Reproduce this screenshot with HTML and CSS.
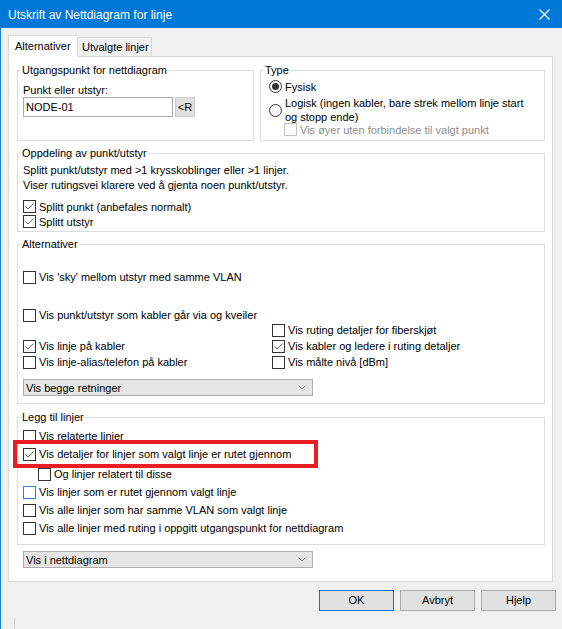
FILE: index.html
```html
<!DOCTYPE html>
<html lang="no">
<head>
<meta charset="utf-8">
<title>Utskrift av Nettdiagram for linje</title>
<link rel="stylesheet" href="styles.css">
</head>
<body>
<div class="dialog">
  <div class="titlebar">
    <span class="title">Utskrift av Nettdiagram for linje</span>
    <svg class="close" width="11" height="11" viewBox="0 0 11 11"><path d="M0.5 0.5 L10.5 10.5 M10.5 0.5 L0.5 10.5" stroke="#fff" stroke-width="1.1" fill="none"/></svg>
  </div>
  <div class="tabs">
    <div class="tab active">Alternativer</div>
    <div class="tab">Utvalgte linjer</div>
  </div>
  <div class="panel">
    <div class="toprow">
      <fieldset class="grp g-start">
        <legend>Utgangspunkt for nettdiagram</legend>
        <div class="lbl">Punkt eller utstyr:</div>
        <div class="inputrow">
          <div class="textbox">NODE-01</div>
          <div class="smallbtn">&lt;R</div>
        </div>
      </fieldset>
      <fieldset class="grp g-type">
        <legend>Type</legend>
        <div class="radio"><span class="rb on"><span class="dot"></span></span><span>Fysisk</span></div>
        <div class="radio multi"><span class="rb"></span><span>Logisk (ingen kabler, bare strek mellom linje start<br>og stopp ende)</span></div>
        <div class="cb disabled sub"><span class="box"></span><span>Vis øyer uten forbindelse til valgt punkt</span></div>
      </fieldset>
    </div>

    <fieldset class="grp g-split">
      <legend>Oppdeling av punkt/utstyr</legend>
      <div class="txt">Splitt punkt/utstyr med &gt;1 krysskoblinger eller &gt;1 linjer.</div>
      <div class="txt">Viser rutingsvei klarere ved å gjenta noen punkt/utstyr.</div>
      <div class="cb r15 first"><span class="box"><svg width="11" height="11" viewBox="0 0 11 11"><polyline points="1.5,5.5 4,8 9.5,2.5" fill="none" stroke="#5f5f5f" stroke-width="1"/></svg></span><span>Splitt punkt (anbefales normalt)</span></div>
      <div class="cb r15"><span class="box"><svg width="11" height="11" viewBox="0 0 11 11"><polyline points="1.5,5.5 4,8 9.5,2.5" fill="none" stroke="#5f5f5f" stroke-width="1"/></svg></span><span>Splitt utstyr</span></div>
    </fieldset>

    <fieldset class="grp g-alt">
      <legend>Alternativer</legend>
      <div class="cb sky"><span class="box"></span><span>Vis 'sky' mellom utstyr med samme VLAN</span></div>
      <div class="cb via"><span class="box"></span><span>Vis punkt/utstyr som kabler går via og kveiler</span></div>
      <div class="altgrid">
        <div></div>
        <div class="cb"><span class="box"></span><span>Vis ruting detaljer for fiberskjøt</span></div>
        <div class="cb"><span class="box"><svg width="11" height="11" viewBox="0 0 11 11"><polyline points="1.5,5.5 4,8 9.5,2.5" fill="none" stroke="#5f5f5f" stroke-width="1"/></svg></span><span>Vis linje på kabler</span></div>
        <div class="cb"><span class="box"><svg width="11" height="11" viewBox="0 0 11 11"><polyline points="1.5,5.5 4,8 9.5,2.5" fill="none" stroke="#5f5f5f" stroke-width="1"/></svg></span><span>Vis kabler og ledere i ruting detaljer</span></div>
        <div class="cb"><span class="box"></span><span>Vis linje-alias/telefon på kabler</span></div>
        <div class="cb"><span class="box"></span><span>Vis målte nivå [dBm]</span></div>
      </div>
      <div class="combo c-alt"><span>Vis begge retninger</span><svg width="8" height="5" viewBox="0 0 8 5"><polyline points="0.5,0.5 4,4 7.5,0.5" fill="none" stroke="#8a8a8a" stroke-width="1"/></svg></div>
    </fieldset>

    <fieldset class="grp g-legg">
      <legend>Legg til linjer</legend>
      <div class="cb r18"><span class="box"></span><span>Vis relaterte linjer</span></div>
      <div class="cb r18 marked"><span class="box"><svg width="11" height="11" viewBox="0 0 11 11"><polyline points="1.5,5.5 4,8 9.5,2.5" fill="none" stroke="#5f5f5f" stroke-width="1"/></svg></span><span>Vis detaljer for linjer som valgt linje er rutet gjennom</span><span class="redmark"></span></div>
      <div class="cb r18 indent"><span class="box"></span><span>Og linjer relatert til disse</span></div>
      <div class="cb r18"><span class="box focus"></span><span>Vis linjer som er rutet gjennom valgt linje</span></div>
      <div class="cb r18"><span class="box"></span><span>Vis alle linjer som har samme VLAN som valgt linje</span></div>
      <div class="cb r18"><span class="box"></span><span>Vis alle linjer med ruting i oppgitt utgangspunkt for nettdiagram</span></div>
    </fieldset>

    <div class="combo c-net"><span>Vis i nettdiagram</span><svg width="8" height="5" viewBox="0 0 8 5"><polyline points="0.5,0.5 4,4 7.5,0.5" fill="none" stroke="#8a8a8a" stroke-width="1"/></svg></div>
  </div>

  <div class="buttons">
    <div class="btn default">OK</div>
    <div class="btn">Avbryt</div>
    <div class="btn">Hjelp</div>
  </div>
  <div class="grip"></div>
</div>
</body>
</html>
```
FILE: styles.css
```css
html, body {
  margin: 0;
  padding: 0;
}
body {
  width: 562px;
  height: 629px;
  overflow: hidden;
  background: #f0f0f0;
  font-family: "Liberation Sans", Arial, sans-serif;
  font-size: 11px;
  color: #000;
}
.dialog {
  height: 629px;
  box-sizing: border-box;
  border-left: 1px solid #1c84d8;
  background: #f0f0f0;
}
.titlebar {
  height: 28px;
  margin-left: -1px;
  background: #0078d7;
  color: #fff;
  display: flex;
  align-items: center;
  justify-content: space-between;
  padding: 2px 12px 0 8px;
  box-sizing: border-box;
}
.title {
  font-size: 12px;
}
.close {
  display: block;
  margin-top: -1px;
}
.tabs {
  display: flex;
  align-items: flex-end;
  margin-top: 7px;
  padding-left: 7px;
  height: 21px;
}
.tab {
  box-sizing: border-box;
  border: 1px solid #d9d9d9;
  border-bottom: none;
  height: 19px;
  width: 75px;
  padding: 2px 0 0 4px;
  line-height: 15px;
  background: #f0f0f0;
}
.tab.active {
  position: relative;
  z-index: 1;
  background: #fff;
  height: 22px;
  width: 69px;
  margin-bottom: -1px;
  padding: 3px 0 0 6px;
  border-right: none;
}
.panel {
  margin: 0 9px 0 7px;
  border: 1px solid #d9d9d9;
  background: #fff;
  padding: 6px 7px 13px 8px;
  height: 526px;
  box-sizing: border-box;
}
.toprow {
  display: flex;
  gap: 6px;
}
.grp {
  margin: 0;
  border: 1px solid #dcdcdc;
  min-width: 0;
  box-sizing: border-box;
  padding: 0 0 0 5px;
}
.grp legend {
  padding: 0 1px;
  margin-left: -2px;
  line-height: 14px;
}
.g-start {
  width: 237px;
  height: 78px;
  padding-top: 6px;
}
.lbl {
  line-height: 14px;
}
.inputrow {
  display: flex;
  gap: 2px;
}
.textbox {
  width: 150px;
  height: 20px;
  box-sizing: border-box;
  border: 1px solid #a9a9a9;
  padding: 0 2px;
  line-height: 18px;
}
.smallbtn {
  width: 20px;
  height: 20px;
  box-sizing: border-box;
  border: 1px solid #cccccc;
  background: #e1e1e1;
  text-align: center;
  line-height: 18px;
}
.g-type {
  flex: 1;
  height: 78px;
  padding: 2px 0 0 8px;
}
.g-type legend {
  margin-left: -5px;
}
.radio {
  display: flex;
  align-items: center;
  gap: 3px;
  height: 15px;
}
.radio.multi {
  height: auto;
  line-height: 14px;
  margin-top: 2px;
}
.rb {
  flex: none;
  width: 13px;
  height: 13px;
  box-sizing: border-box;
  border: 1px solid #333;
  border-radius: 50%;
  background: #fff;
  display: flex;
  align-items: center;
  justify-content: center;
}
.dot {
  width: 7px;
  height: 7px;
  border-radius: 50%;
  background: #333;
}
.cb {
  display: flex;
  align-items: center;
  gap: 3px;
  height: 16px;
  white-space: nowrap;
}
.box {
  flex: none;
  width: 13px;
  height: 13px;
  box-sizing: border-box;
  border: 1px solid #333;
  background: #fff;
  display: flex;
}
.box svg {
  display: block;
}
.box.focus {
  border-color: #2a7fd8;
}
.cb.disabled {
  color: #8d8d8d;
}
.cb.disabled .box {
  border-color: #c3c3c3;
  background: #fcfcfc;
}
.cb.sub {
  height: 15px;
  margin-left: 15px;
  margin-top: -2px;
}
.g-split {
  margin-top: 5px;
  height: 86px;
  padding-top: 3px;
}
.txt {
  line-height: 15px;
}
.cb.r15 {
  height: 15px;
}
.cb.first {
  margin-top: 6px;
}
.g-alt {
  margin-top: 5px;
  height: 167px;
  padding-top: 18px;
}
.cb.via {
  margin-top: 22px;
}
.altgrid {
  display: grid;
  grid-template-columns: 249px auto;
  grid-auto-rows: 16px;
  margin-top: -1px;
}
.combo {
  width: 290px;
  height: 17px;
  box-sizing: border-box;
  border: 1px solid #acacac;
  background: #e5e5e5;
  display: flex;
  align-items: center;
  justify-content: space-between;
  padding: 0 6px 0 2px;
}
.combo svg {
  display: block;
}
.c-alt {
  margin-top: 9px;
}
.g-legg {
  margin-top: 6px;
  height: 135px;
  padding-top: 3px;
}
.cb.r18 {
  height: 18px;
}
.cb.indent {
  margin-left: 15px;
  margin-top: 2px;
}
.marked {
  position: relative;
}
.redmark {
  position: absolute;
  left: -10px;
  top: -5px;
  width: 305px;
  height: 28px;
  box-sizing: border-box;
  border: 4px solid #ec1c24;
}
.c-net {
  margin-top: 6px;
  margin-left: 6px;
}
.buttons {
  display: flex;
  justify-content: flex-end;
  gap: 6px;
  margin-top: 8px;
  padding-right: 6px;
}
.btn {
  width: 75px;
  height: 21px;
  box-sizing: border-box;
  border: 1px solid #adadad;
  background: #e1e1e1;
  text-align: center;
  line-height: 19px;
}
.btn.default {
  border-color: #0078d7;
}
.grip {
  margin: 7px 0 0 13px;
  height: 11px;
  border-left: 1px solid #d0d0d0;
}
```
